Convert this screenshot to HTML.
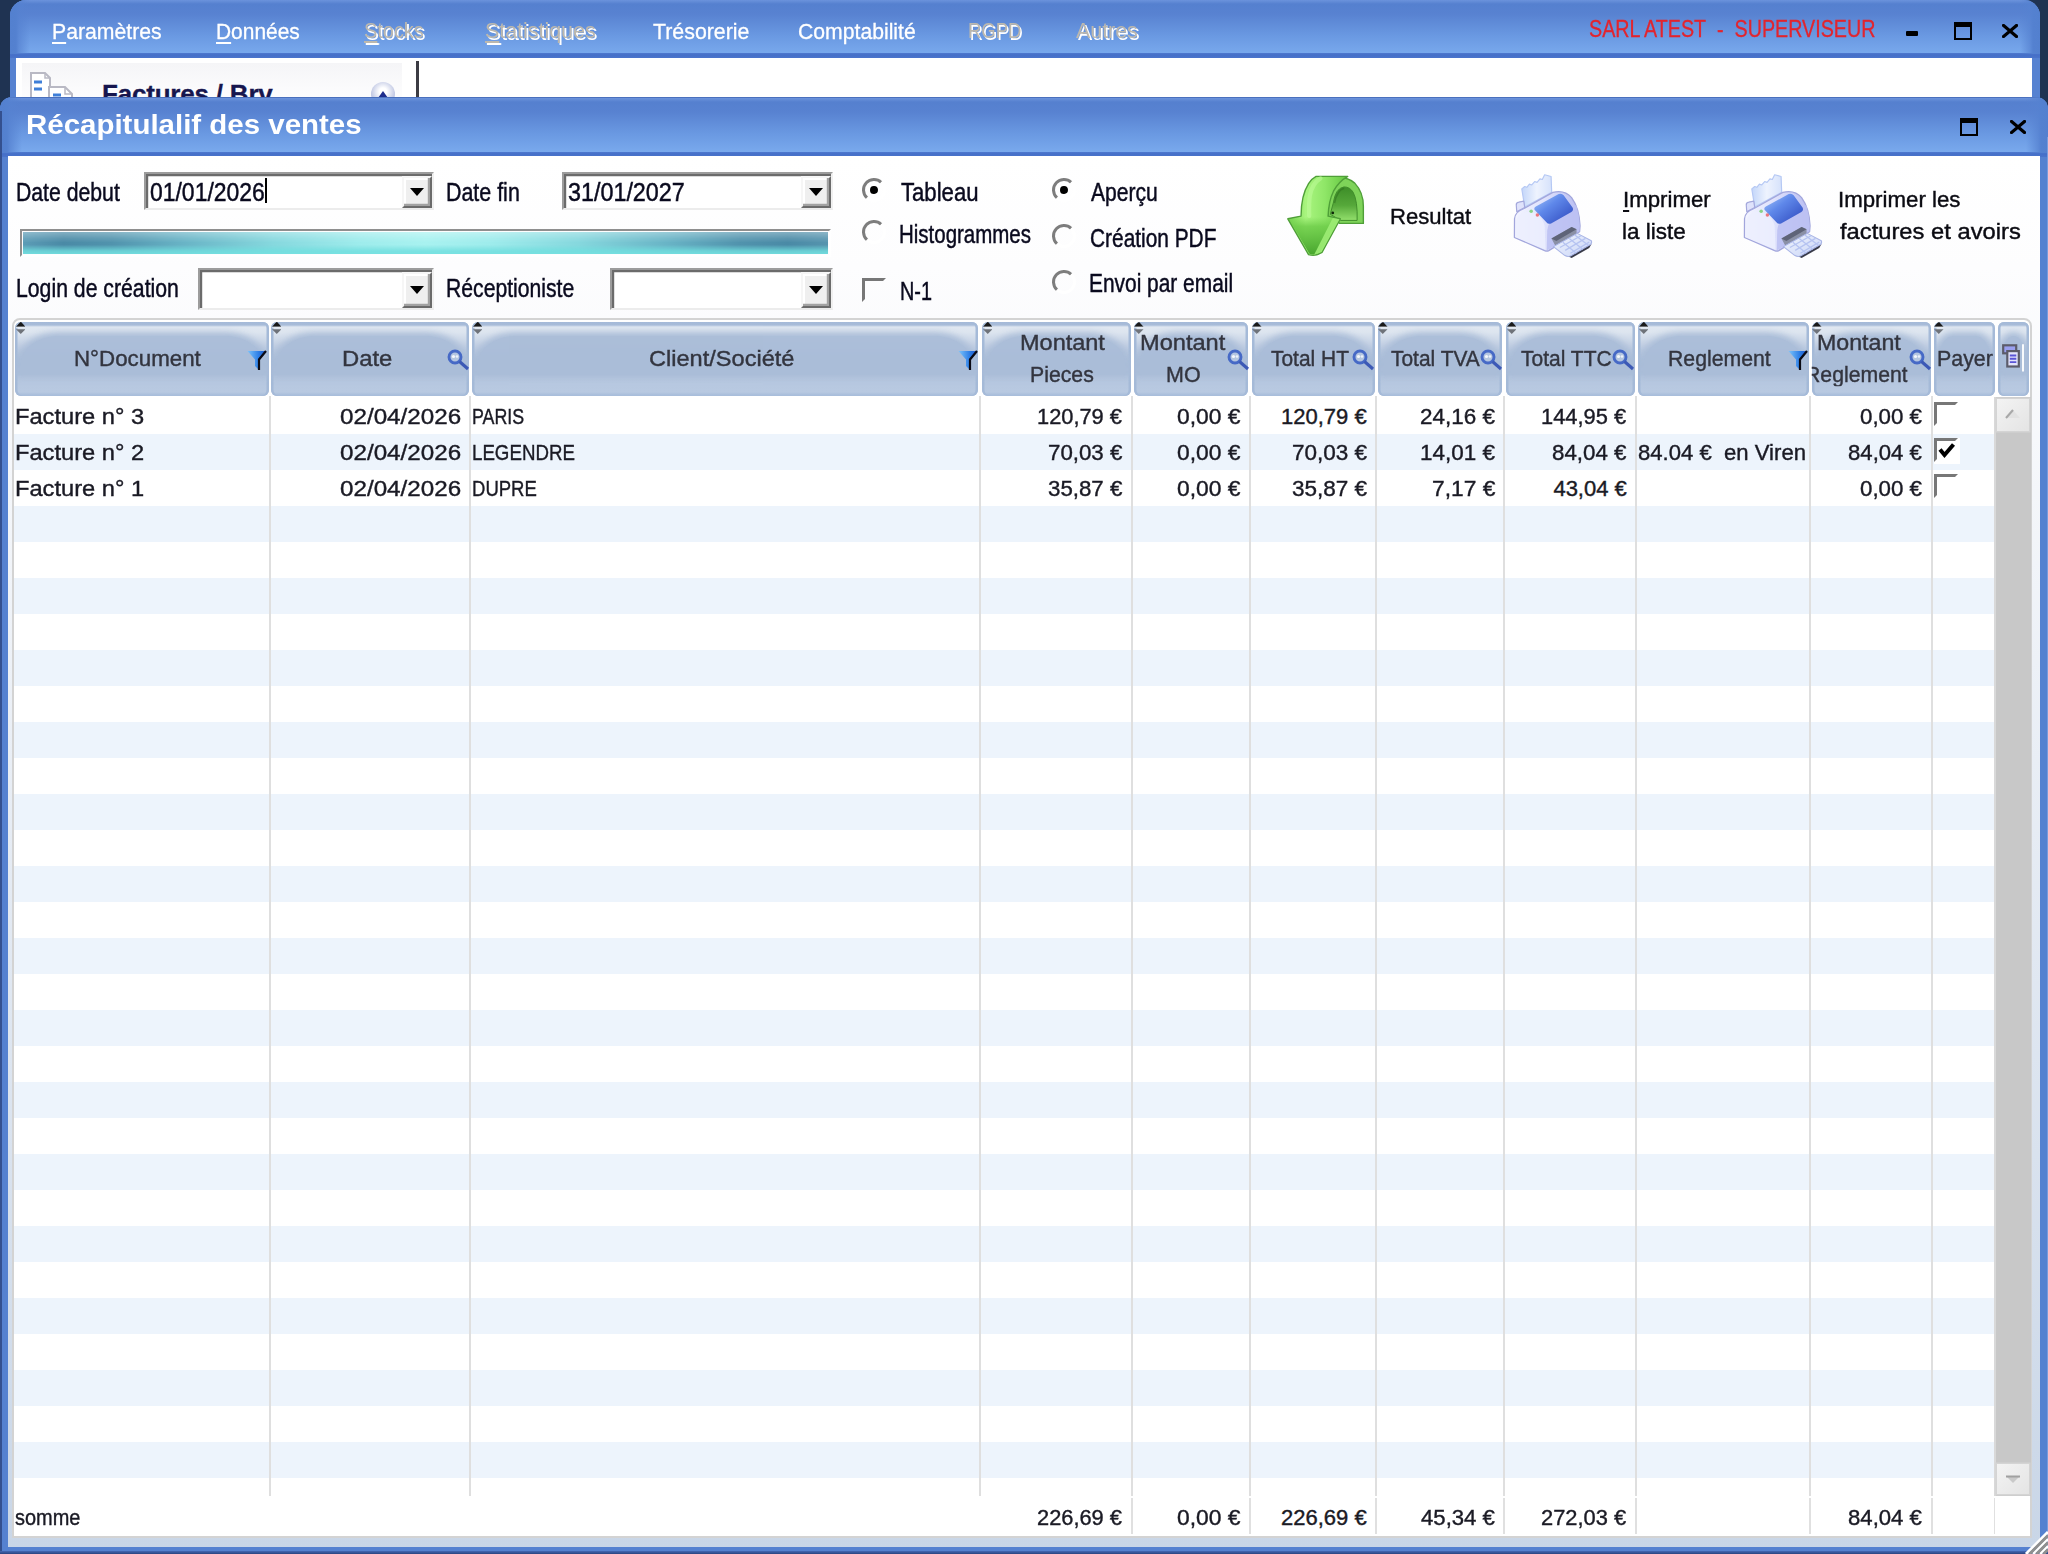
<!DOCTYPE html>
<html lang="fr"><head><meta charset="utf-8"><title>Récapitulalif des ventes</title>
<style>
html,body{margin:0;padding:0}
body{width:2048px;height:1554px;overflow:hidden;background:#1f3352;position:relative;font-family:"Liberation Sans",sans-serif}
.a,.t,i,b{position:absolute;display:block}
.t{white-space:nowrap;line-height:1;transform-origin:0 50%;color:#000;-webkit-text-stroke:.3px currentColor}
.t u{text-decoration-thickness:2px;text-underline-offset:3px}
.mn{color:#fff}
.sh{color:#bcb8ae;text-shadow:2px 2px 0 #fff;-webkit-text-stroke:0}
.red{color:#e3242d}
.ttl{color:#fff;font-weight:bold;-webkit-text-stroke:0}
.fl{color:#0a0a1e;-webkit-text-stroke:.45px currentColor}
.bt{color:#0b0b12;-webkit-text-stroke:.4px currentColor}
.th{color:#33353f;-webkit-text-stroke:.4px currentColor}
.td{color:#1a1a24;-webkit-text-stroke:.4px currentColor}
/* windows */
#ow{left:10px;top:0;width:2030px;height:140px;border-radius:16px 16px 0 0;background:#5682d1;overflow:hidden}
#iw{left:0;top:97px;width:2048px;height:1457px;border-radius:12px 12px 0 0;background:#5581d0;overflow:hidden}
.tb{left:0;right:0;top:0;height:56px;background:linear-gradient(#6b93dc 0,#5580cf 4px,#5882d1 14px,#6a99e2 36px,#79a9ed 54px,#79a9ed 100%)}
.tl{left:0;right:0;top:54px;height:5px;background:linear-gradient(#4e79cf,#456fc8 40%,#4a74cb)}
/* sunken inputs */
.inp{background:#fff;box-sizing:border-box;border:2px solid;border-color:#9c9c9c #f0f0f0 #ececec #9c9c9c;box-shadow:inset 2.2px 2.2px 0 #6b6b6b}
.dd{box-sizing:border-box;background:#efefef;border:2.2px solid;border-color:#f6f6f6 #6b6b6b #6b6b6b #f6f6f6;box-shadow:inset -2.2px -2.2px 0 #a2a2a2,inset 2px 2px 0 #fff}
.dd:after{content:"";position:absolute;left:50%;top:50%;margin:-4.5px 0 0 -7.5px;border:7.2px solid transparent;border-top:8.6px solid #000;border-bottom:0}
.rd{width:24px;height:24px;box-sizing:border-box;border-radius:50%;border:3px solid;border-color:#7d7d7d #fff #fff #7d7d7d;transform:rotate(-2deg)}
.rd.on:after{content:"";position:absolute;left:4.7px;top:4.7px;width:8.6px;height:8.6px;border-radius:50%;background:#000}
.cb{width:24px;height:24px;box-sizing:border-box;border:3.5px solid;border-color:#777 transparent transparent #777}
/* table */
.hc{top:322px;height:74px;border-radius:6px;overflow:hidden;box-sizing:border-box;
 background:linear-gradient(#a4b9d8 0,#a8bcd9 3px,#e0e7f1 5px,#dde5ef 10px,#cdd8e8 18px,#b9c8df 28px,#aabdd8 38px,#aabdd8 52px,#b6c7df 54px,#b8c9e1 70px,#a9bedb 73px);
 box-shadow:inset 2.5px 0 0 #a5bad8,inset -2.5px 0 0 #a5bad8}
.dm{left:5px;right:5px;top:14px;height:38px;border-radius:38px 38px 0 0/30px 30px 0 0;background:#aabdd8;box-shadow:0 0 6px 4px #aabdd8;opacity:.95}
.so{left:.5px;top:-.8px;width:9.5px;height:13.5px}
.vs{width:2px;background:#dfdfdf;top:396px;height:1100px}
.vf{width:2px;background:#e0e0e0;top:1498px;height:36px}
.alt{left:14px;width:1981px;height:36px;background:#edf4fc}
#pg{left:0;top:0;width:2048px;height:1554px;filter:blur(.55px)}
</style></head><body><div class="a" id="pg">
<div class="a" id="ow">
<i class="tb" style="height:55px"></i><i class="tl" style="top:53px"></i>
<i style="left:0;top:0;width:20px;height:54px;background:linear-gradient(to right,#5380cf 0,#5481d0 6px,rgba(86,130,209,.7) 9px,rgba(86,130,209,0) 20px)"></i>
<i style="right:0;top:0;width:20px;height:54px;background:linear-gradient(to left,#5380cf 0,#5481d0 7px,rgba(86,130,209,.7) 10px,rgba(86,130,209,0) 20px)"></i>
<i style="left:6px;top:58px;right:8px;bottom:0;background:#fff"></i>
<i style="left:12px;top:63px;width:380px;height:80px;background:linear-gradient(#f5f5f7,#fcfcfd 30px,#fff)"></i>
<i style="left:406px;top:61px;width:2.5px;height:80px;background:#3c3c44"></i>
</div>
<svg class="a" style="left:28px;top:70px" width="50" height="30" viewBox="0 0 50 30"><path d="M3 3h14l5 5v22H3z" fill="#fff" stroke="#b9b9c4" stroke-width="2"/><path d="M17 3v5h5" fill="none" stroke="#b9b9c4" stroke-width="1.5"/><path d="M6 12h8M6 19h8" stroke="#3f7fd8" stroke-width="3"/><path d="M21 17h16l7 7v8H21z" fill="#fff" stroke="#b9b9c4" stroke-width="2"/><path d="M37 17v7h7" fill="none" stroke="#b9b9c4" stroke-width="1.5"/><path d="M25 25h8" stroke="#3f7fd8" stroke-width="3"/></svg>
<span class="t" style="left:102px;top:81px;font-size:26px;font-weight:bold;color:#16164e;letter-spacing:-.2px">Factures / Brv</span>
<i style="left:371px;top:82px;width:24px;height:24px;border-radius:50%;background:radial-gradient(circle at 50% 40%,#fff 20%,#b8c0e0 70%,#8d97c8)"></i>
<i style="left:378px;top:91px;border:5px solid transparent;border-bottom:7px solid #1e2d8c;border-top:0"></i>
<div class="a" id="iw">
<i style="left:0;right:0;top:0;height:2px;background:#4a70bd"></i>
<i class="tb" style="top:1px"></i><i class="tl" style="top:55px"></i>
<i style="left:0;top:0;width:22px;height:56px;background:linear-gradient(to right,#5380cf 0,#5481d0 7px,rgba(86,130,209,.75) 10px,rgba(86,130,209,0) 22px)"></i>
<i style="right:0;top:0;width:22px;height:56px;background:linear-gradient(to left,#5380cf 0,#5481d0 7px,rgba(86,130,209,.75) 10px,rgba(86,130,209,0) 22px)"></i>
<i style="left:8px;top:59px;width:2032px;height:1391px;background:linear-gradient(#fff 0,#fdfdfe 8%,#c9d6e7 100%)"></i>
<i style="left:0;top:14px;width:1.500px;bottom:0;background:#34508f"></i>
<i style="right:0;top:40px;width:1.500px;bottom:0;background:#7a9bdb"></i>
<i style="left:0;right:0;bottom:0;height:3px;background:linear-gradient(#4468b4,#2a437f)"></i>
</div>
<div class="a" style="left:1906px;top:31px;width:12px;height:5px;background:#000;border-radius:1px"></div>
<i style="left:1954px;top:22px;width:18px;height:18px;box-sizing:border-box;border:2.5px solid #000;border-top-width:5px"></i>
<svg class="a" style="left:2002px;top:24px" width="16" height="14" viewBox="0 0 16 14"><path d="M1.5 1.5L14.5 12.5M14.5 1.5L1.5 12.5" stroke="#000" stroke-width="3.2" stroke-linecap="square"/></svg>
<i style="left:1960px;top:118px;width:18px;height:18px;box-sizing:border-box;border:2.5px solid #000;border-top-width:5px"></i>
<svg class="a" style="left:2010px;top:120px" width="16" height="14" viewBox="0 0 16 14"><path d="M1.5 1.5L14.5 12.5M14.5 1.5L1.5 12.5" stroke="#000" stroke-width="3.2" stroke-linecap="square"/></svg>
<div class="a inp" style="left:144px;top:172px;width:290px;height:38px;"></div>
<div class="a dd" style="left:402.3px;top:176.3px;width:29.7px;height:31.7px;"></div>
<div class="a inp" style="left:562px;top:172px;width:271px;height:38px;"></div>
<div class="a dd" style="left:801.3px;top:176.3px;width:29.7px;height:31.7px;"></div>
<div class="a inp" style="left:198px;top:268px;width:236px;height:42px;"></div>
<div class="a dd" style="left:402.3px;top:272.3px;width:29.7px;height:35.7px;"></div>
<div class="a inp" style="left:610px;top:268px;width:223px;height:42px;"></div>
<div class="a dd" style="left:801.3px;top:272.3px;width:29.7px;height:35.7px;"></div>
<div class="a" style="left:265.3px;top:178px;width:2px;height:25px;background:#000"></div>
<div class="a" style="left:20px;top:229px;width:811px;height:28px;box-sizing:border-box;border:2px solid;border-color:#8f8f8f #fff #fff #8f8f8f"></div>
<div class="a" style="left:22.5px;top:232px;width:805.5px;height:22px;background:linear-gradient(rgba(255,255,255,.32) 0,rgba(255,255,255,.1) 30%,rgba(255,255,255,0) 48%,rgba(112,222,222,0) 58%,rgba(112,222,222,.8) 86%,rgba(116,224,224,.92) 100%),linear-gradient(to right,#5c9cb6 0,#4a8aa6 5%,#5193ad 11%,#69b4c6 20%,#86d8de 31%,#9eecec 42%,#a8f2f0 50%,#9eecec 58%,#86d8de 69%,#69b4c6 80%,#5193ad 89%,#4a8aa6 95%,#5694ae 100%)"></div>
<i class="rd on" style="left:862px;top:178px"></i>
<i class="rd" style="left:862px;top:220px"></i>
<i class="rd on" style="left:1052px;top:178px"></i>
<i class="rd" style="left:1052px;top:224px"></i>
<i class="rd" style="left:1052px;top:270px"></i>
<i class="cb" style="left:862px;top:278px"></i>
<svg class="a" style="left:1286.1px;top:174px" width="79.5" height="83.8" viewBox="150 130 740 780">
<defs>
<linearGradient id="g1" x1="0" y1="0" x2="1" y2="0"><stop offset="0" stop-color="#74d24e"/><stop offset=".3" stop-color="#a9f57f"/><stop offset=".62" stop-color="#8fe667"/><stop offset="1" stop-color="#63c540"/></linearGradient>
<linearGradient id="g2" x1="0" y1="0" x2="0" y2="1"><stop offset="0" stop-color="#3d8d28"/><stop offset=".55" stop-color="#56a83a"/><stop offset="1" stop-color="#93e06c"/></linearGradient>
<linearGradient id="g3" x1="0" y1="0" x2="0" y2="1"><stop offset="0" stop-color="#74d04f" stop-opacity="0"/><stop offset=".25" stop-color="#6ccb48" stop-opacity=".8"/><stop offset="1" stop-color="#48a62e"/></linearGradient>
</defs>
<path d="M600 178 Q700 140 790 215 Q870 300 870 430 L870 590 L650 590 L540 525 Q545 330 600 178Z" fill="#7ed359" stroke="#4f9f38" stroke-width="13" stroke-linejoin="round"/>
<path d="M690 250 Q610 262 590 400 L562 505 L660 562 L812 562 Q818 380 775 300 Q745 250 690 250Z" fill="url(#g2)" stroke="#3f8c2b" stroke-width="9"/>
<path d="M690 262 Q625 280 602 400" fill="none" stroke="#2d6f1e" stroke-width="14" opacity=".55"/>
<path d="M430 152 L725 152 Q640 200 592 290 Q547 380 542 522 L655 547 L485 860 Q425 900 360 880 L167 547 L290 522 Q290 330 360 220 Q390 172 430 152Z" fill="url(#g1)" stroke="#4f9f38" stroke-width="13" stroke-linejoin="round"/>
<path d="M180 553 L292 530 L540 530 L640 552 L472 852 Q420 888 368 872Z" fill="url(#g3)"/>
<path d="M585 540 L648 552 L480 856 L412 882Z" fill="#9ceb74" opacity=".92"/>
<path d="M470 170 Q395 215 372 330 Q362 400 366 520" fill="none" stroke="#c5ffa2" stroke-width="40" opacity=".45" stroke-linecap="round"/>
<circle cx="585" cy="492" r="13" fill="#0d2608"/>
</svg>
<svg class="a" style="left:1513.4px;top:172.9px" width="80.9" height="85.6" viewBox="200 110 690 730">
<defs>
<linearGradient id="p1a" x1="0" y1="0" x2="1" y2="1"><stop offset="0" stop-color="#a9cbfb"/><stop offset=".4" stop-color="#5f88ea"/><stop offset="1" stop-color="#2c46bc"/></linearGradient>
<linearGradient id="p2a" x1="0" y1="0" x2="1" y2="0"><stop offset="0" stop-color="#f4f5ff"/><stop offset=".45" stop-color="#dfe2fc"/><stop offset="1" stop-color="#b7bcf1"/></linearGradient>
<linearGradient id="p3a" x1="0" y1="0" x2="1" y2="0"><stop offset="0" stop-color="#c3d6f9"/><stop offset=".5" stop-color="#eef3fe"/><stop offset="1" stop-color="#d6e2fb"/></linearGradient>
<linearGradient id="p4a" x1="0" y1="0" x2="1" y2="1"><stop offset="0" stop-color="#f2f5fe"/><stop offset="1" stop-color="#c9d5f6"/></linearGradient>
</defs>
<path d="M660 815 L700 835 L850 750 L870 715 L760 760Z" fill="#1c1f30" opacity=".88"/>
<path d="M275 245 L300 225 L318 232 L340 205 L360 212 L385 183 L405 190 L430 160 L450 165 L470 125 L525 140 L530 275 L300 400Z" fill="url(#p3a)" stroke="#b5c8f4" stroke-width="10" stroke-linejoin="round"/>
<path d="M228 385 Q225 362 250 358 L292 350 L300 405 L232 440Z" fill="#dfe2fb" stroke="#a4a8dc" stroke-width="10" stroke-linejoin="round"/>
<path d="M212 660 L213 500 Q218 440 290 415 L540 275 Q640 250 700 320 Q765 410 772 560 L768 610 L505 772 Q490 780 470 772Z" fill="url(#p2a)" stroke="#a2a6dc" stroke-width="11" stroke-linejoin="round"/>
<path d="M488 770 L492 600 Q500 520 560 480 L740 380 Q768 470 770 560 L766 606Z" fill="#bcc1f3" opacity=".9"/>
<path d="M225 655 L226 520 Q240 450 330 440 Q440 450 470 560 L478 765Z" fill="#eceefe" opacity=".85"/>
<path d="M395 395 L590 290 Q615 280 632 300 L708 405 Q720 428 698 442 L525 540 Q500 550 485 530 L385 425 Q375 405 395 395Z" fill="url(#p1a)"/>
<circle cx="355" cy="436" r="15" fill="#8bd387"/><circle cx="408" cy="468" r="15" fill="#e9767f"/>
<path d="M528 668 L700 570 L742 590 L742 625 L560 728Z" fill="#8a90a6"/>
<path d="M528 668 L700 570 L742 590 L570 690Z" fill="#5e6378"/>
<path d="M545 738 L748 625 L868 688 Q876 706 860 720 L690 818 Q665 828 640 812Z" fill="url(#p4a)" stroke="#a9b5e6" stroke-width="9" stroke-linejoin="round"/>
<path d="M600 745 L780 645 M645 770 L818 668 M690 795 L850 700 M625 700 L740 795 M680 668 L795 760 M730 640 L845 728" stroke="#b5c3f1" stroke-width="11"/>
</svg>
<svg class="a" style="left:1743.4px;top:172.9px" width="80.9" height="85.6" viewBox="200 110 690 730">
<defs>
<linearGradient id="p1b" x1="0" y1="0" x2="1" y2="1"><stop offset="0" stop-color="#a9cbfb"/><stop offset=".4" stop-color="#5f88ea"/><stop offset="1" stop-color="#2c46bc"/></linearGradient>
<linearGradient id="p2b" x1="0" y1="0" x2="1" y2="0"><stop offset="0" stop-color="#f4f5ff"/><stop offset=".45" stop-color="#dfe2fc"/><stop offset="1" stop-color="#b7bcf1"/></linearGradient>
<linearGradient id="p3b" x1="0" y1="0" x2="1" y2="0"><stop offset="0" stop-color="#c3d6f9"/><stop offset=".5" stop-color="#eef3fe"/><stop offset="1" stop-color="#d6e2fb"/></linearGradient>
<linearGradient id="p4b" x1="0" y1="0" x2="1" y2="1"><stop offset="0" stop-color="#f2f5fe"/><stop offset="1" stop-color="#c9d5f6"/></linearGradient>
</defs>
<path d="M660 815 L700 835 L850 750 L870 715 L760 760Z" fill="#1c1f30" opacity=".88"/>
<path d="M275 245 L300 225 L318 232 L340 205 L360 212 L385 183 L405 190 L430 160 L450 165 L470 125 L525 140 L530 275 L300 400Z" fill="url(#p3b)" stroke="#b5c8f4" stroke-width="10" stroke-linejoin="round"/>
<path d="M228 385 Q225 362 250 358 L292 350 L300 405 L232 440Z" fill="#dfe2fb" stroke="#a4a8dc" stroke-width="10" stroke-linejoin="round"/>
<path d="M212 660 L213 500 Q218 440 290 415 L540 275 Q640 250 700 320 Q765 410 772 560 L768 610 L505 772 Q490 780 470 772Z" fill="url(#p2b)" stroke="#a2a6dc" stroke-width="11" stroke-linejoin="round"/>
<path d="M488 770 L492 600 Q500 520 560 480 L740 380 Q768 470 770 560 L766 606Z" fill="#bcc1f3" opacity=".9"/>
<path d="M225 655 L226 520 Q240 450 330 440 Q440 450 470 560 L478 765Z" fill="#eceefe" opacity=".85"/>
<path d="M395 395 L590 290 Q615 280 632 300 L708 405 Q720 428 698 442 L525 540 Q500 550 485 530 L385 425 Q375 405 395 395Z" fill="url(#p1b)"/>
<circle cx="355" cy="436" r="15" fill="#8bd387"/><circle cx="408" cy="468" r="15" fill="#e9767f"/>
<path d="M528 668 L700 570 L742 590 L742 625 L560 728Z" fill="#8a90a6"/>
<path d="M528 668 L700 570 L742 590 L570 690Z" fill="#5e6378"/>
<path d="M545 738 L748 625 L868 688 Q876 706 860 720 L690 818 Q665 828 640 812Z" fill="url(#p4b)" stroke="#a9b5e6" stroke-width="9" stroke-linejoin="round"/>
<path d="M600 745 L780 645 M645 770 L818 668 M690 795 L850 700 M625 700 L740 795 M680 668 L795 760 M730 640 L845 728" stroke="#b5c3f1" stroke-width="11"/>
</svg>
<div class="a" style="left:12px;top:318px;width:2020px;height:1219.5px;box-sizing:border-box;border:2px solid #d3d3d3;border-radius:8px 8px 0 0;background:#fff"></div>
<i class="alt" style="top:434px"></i>
<i class="alt" style="top:506px"></i>
<i class="alt" style="top:578px"></i>
<i class="alt" style="top:650px"></i>
<i class="alt" style="top:722px"></i>
<i class="alt" style="top:794px"></i>
<i class="alt" style="top:866px"></i>
<i class="alt" style="top:938px"></i>
<i class="alt" style="top:1010px"></i>
<i class="alt" style="top:1082px"></i>
<i class="alt" style="top:1154px"></i>
<i class="alt" style="top:1226px"></i>
<i class="alt" style="top:1298px"></i>
<i class="alt" style="top:1370px"></i>
<i class="alt" style="top:1442px"></i>
<div class="a hc" style="left:15.4px;width:253.5px"><i class="dm"></i><svg class="a so" viewBox="0 0 10 14"><path d="M0 6L5 .5L10 6Z" fill="#1a1a1a"/><path d="M0 8.500h10L5 13.500Z" fill="#6f737a"/><path d="M0 6.500h10" stroke="#e8ecf2" stroke-width="1"/></svg></div>
<div class="a hc" style="left:271.4px;width:197.5px"><i class="dm"></i><svg class="a so" viewBox="0 0 10 14"><path d="M0 6L5 .5L10 6Z" fill="#1a1a1a"/><path d="M0 8.500h10L5 13.500Z" fill="#6f737a"/><path d="M0 6.500h10" stroke="#e8ecf2" stroke-width="1"/></svg></div>
<div class="a hc" style="left:472px;width:506.4px"><i class="dm"></i><svg class="a so" viewBox="0 0 10 14"><path d="M0 6L5 .5L10 6Z" fill="#1a1a1a"/><path d="M0 8.500h10L5 13.500Z" fill="#6f737a"/><path d="M0 6.500h10" stroke="#e8ecf2" stroke-width="1"/></svg></div>
<div class="a hc" style="left:982px;width:148.7px"><i class="dm"></i><svg class="a so" viewBox="0 0 10 14"><path d="M0 6L5 .5L10 6Z" fill="#1a1a1a"/><path d="M0 8.500h10L5 13.500Z" fill="#6f737a"/><path d="M0 6.500h10" stroke="#e8ecf2" stroke-width="1"/></svg></div>
<div class="a hc" style="left:1133.8px;width:114.6px"><i class="dm"></i><svg class="a so" viewBox="0 0 10 14"><path d="M0 6L5 .5L10 6Z" fill="#1a1a1a"/><path d="M0 8.500h10L5 13.500Z" fill="#6f737a"/><path d="M0 6.500h10" stroke="#e8ecf2" stroke-width="1"/></svg></div>
<div class="a hc" style="left:1251.9px;width:122.7px"><i class="dm"></i><svg class="a so" viewBox="0 0 10 14"><path d="M0 6L5 .5L10 6Z" fill="#1a1a1a"/><path d="M0 8.500h10L5 13.500Z" fill="#6f737a"/><path d="M0 6.500h10" stroke="#e8ecf2" stroke-width="1"/></svg></div>
<div class="a hc" style="left:1377.8px;width:124.6px"><i class="dm"></i><svg class="a so" viewBox="0 0 10 14"><path d="M0 6L5 .5L10 6Z" fill="#1a1a1a"/><path d="M0 8.500h10L5 13.500Z" fill="#6f737a"/><path d="M0 6.500h10" stroke="#e8ecf2" stroke-width="1"/></svg></div>
<div class="a hc" style="left:1506px;width:128.7px"><i class="dm"></i><svg class="a so" viewBox="0 0 10 14"><path d="M0 6L5 .5L10 6Z" fill="#1a1a1a"/><path d="M0 8.500h10L5 13.500Z" fill="#6f737a"/><path d="M0 6.500h10" stroke="#e8ecf2" stroke-width="1"/></svg></div>
<div class="a hc" style="left:1638px;width:170.6px"><i class="dm"></i><svg class="a so" viewBox="0 0 10 14"><path d="M0 6L5 .5L10 6Z" fill="#1a1a1a"/><path d="M0 8.500h10L5 13.500Z" fill="#6f737a"/><path d="M0 6.500h10" stroke="#e8ecf2" stroke-width="1"/></svg></div>
<div class="a hc" style="left:1811.8px;width:118.8px"><i class="dm"></i><svg class="a so" viewBox="0 0 10 14"><path d="M0 6L5 .5L10 6Z" fill="#1a1a1a"/><path d="M0 8.500h10L5 13.500Z" fill="#6f737a"/><path d="M0 6.500h10" stroke="#e8ecf2" stroke-width="1"/></svg></div>
<div class="a hc" style="left:1933.8px;width:61.4px"><i class="dm" style="border-radius:14px 14px 0 0/22px 22px 0 0;left:5px;right:5px"></i><svg class="a so" viewBox="0 0 10 14"><path d="M0 6L5 .5L10 6Z" fill="#1a1a1a"/><path d="M0 8.500h10L5 13.500Z" fill="#6f737a"/><path d="M0 6.500h10" stroke="#e8ecf2" stroke-width="1"/></svg></div>
<div class="a hc" style="left:1998.4px;width:30.5px"><i class="dm" style="border-radius:14px 14px 0 0/22px 22px 0 0;left:5px;right:5px"></i></div>
<i class="vs" style="left:268.5px"></i>
<i class="vs" style="left:468.5px"></i>
<i class="vs" style="left:978.5px"></i>
<i class="vs" style="left:1130.5px"></i>
<i class="vs" style="left:1248.5px"></i>
<i class="vs" style="left:1374.5px"></i>
<i class="vs" style="left:1502.5px"></i>
<i class="vs" style="left:1634.8px"></i>
<i class="vs" style="left:1808.7px"></i>
<i class="vs" style="left:1930.5px"></i>
<i class="vf" style="left:1130.5px"></i>
<i class="vf" style="left:1248.5px"></i>
<i class="vf" style="left:1374.5px"></i>
<i class="vf" style="left:1502.5px"></i>
<i class="vf" style="left:1634.8px"></i>
<i class="vf" style="left:1808.7px"></i>
<i class="vf" style="left:1930.5px"></i>
<i class="vf" style="left:1994px"></i>
<svg class="a" style="left:247px;top:350px" width="20" height="21" viewBox="0 0 20 21"><defs><linearGradient id="f0" x1="0" y1="0" x2="1" y2="0"><stop offset="0" stop-color="#7cc4fb"/><stop offset=".6" stop-color="#2f7fe6"/><stop offset="1" stop-color="#1d55c8"/></linearGradient></defs><path d="M.5 1H19L12 9.500V20L8 16V9.500Z" fill="url(#f0)"/><path d="M19 1L12 9.500V20" fill="none" stroke="#0a0a14" stroke-width="2.2"/></svg>
<svg class="a" style="left:957.5px;top:350px" width="20" height="21" viewBox="0 0 20 21"><defs><linearGradient id="f1" x1="0" y1="0" x2="1" y2="0"><stop offset="0" stop-color="#7cc4fb"/><stop offset=".6" stop-color="#2f7fe6"/><stop offset="1" stop-color="#1d55c8"/></linearGradient></defs><path d="M.5 1H19L12 9.500V20L8 16V9.500Z" fill="url(#f1)"/><path d="M19 1L12 9.500V20" fill="none" stroke="#0a0a14" stroke-width="2.2"/></svg>
<svg class="a" style="left:1787.5px;top:350px" width="20" height="21" viewBox="0 0 20 21"><defs><linearGradient id="f2" x1="0" y1="0" x2="1" y2="0"><stop offset="0" stop-color="#7cc4fb"/><stop offset=".6" stop-color="#2f7fe6"/><stop offset="1" stop-color="#1d55c8"/></linearGradient></defs><path d="M.5 1H19L12 9.500V20L8 16V9.500Z" fill="url(#f2)"/><path d="M19 1L12 9.500V20" fill="none" stroke="#0a0a14" stroke-width="2.2"/></svg>
<svg class="a" style="left:445.8px;top:348px" width="24" height="24" viewBox="0 0 24 24"><circle cx="9" cy="9" r="6" fill="rgba(190,205,232,.55)" stroke="#4669c6" stroke-width="2.9"/><circle cx="7.500" cy="8.500" r="1.600" fill="#f4f7fc"/><circle cx="11" cy="8.500" r="1.300" fill="#eef2fa"/><path d="M13.500 13.500L22 21" stroke="#3c59b6" stroke-width="3.1"/></svg>
<svg class="a" style="left:1225.5px;top:348px" width="24" height="24" viewBox="0 0 24 24"><circle cx="9" cy="9" r="6" fill="rgba(190,205,232,.55)" stroke="#4669c6" stroke-width="2.9"/><circle cx="7.500" cy="8.500" r="1.600" fill="#f4f7fc"/><circle cx="11" cy="8.500" r="1.300" fill="#eef2fa"/><path d="M13.500 13.500L22 21" stroke="#3c59b6" stroke-width="3.1"/></svg>
<svg class="a" style="left:1351px;top:348px" width="24" height="24" viewBox="0 0 24 24"><circle cx="9" cy="9" r="6" fill="rgba(190,205,232,.55)" stroke="#4669c6" stroke-width="2.9"/><circle cx="7.500" cy="8.500" r="1.600" fill="#f4f7fc"/><circle cx="11" cy="8.500" r="1.300" fill="#eef2fa"/><path d="M13.500 13.500L22 21" stroke="#3c59b6" stroke-width="3.1"/></svg>
<svg class="a" style="left:1479px;top:348px" width="24" height="24" viewBox="0 0 24 24"><circle cx="9" cy="9" r="6" fill="rgba(190,205,232,.55)" stroke="#4669c6" stroke-width="2.9"/><circle cx="7.500" cy="8.500" r="1.600" fill="#f4f7fc"/><circle cx="11" cy="8.500" r="1.300" fill="#eef2fa"/><path d="M13.500 13.500L22 21" stroke="#3c59b6" stroke-width="3.1"/></svg>
<svg class="a" style="left:1611.4px;top:348px" width="24" height="24" viewBox="0 0 24 24"><circle cx="9" cy="9" r="6" fill="rgba(190,205,232,.55)" stroke="#4669c6" stroke-width="2.9"/><circle cx="7.500" cy="8.500" r="1.600" fill="#f4f7fc"/><circle cx="11" cy="8.500" r="1.300" fill="#eef2fa"/><path d="M13.500 13.500L22 21" stroke="#3c59b6" stroke-width="3.1"/></svg>
<svg class="a" style="left:1907.8px;top:348px" width="24" height="24" viewBox="0 0 24 24"><circle cx="9" cy="9" r="6" fill="rgba(190,205,232,.55)" stroke="#4669c6" stroke-width="2.9"/><circle cx="7.500" cy="8.500" r="1.600" fill="#f4f7fc"/><circle cx="11" cy="8.500" r="1.300" fill="#eef2fa"/><path d="M13.500 13.500L22 21" stroke="#3c59b6" stroke-width="3.1"/></svg>
<svg class="a" style="left:2001px;top:343px" width="25" height="30" viewBox="0 0 25 30"><rect x="2.200" y="2.300" width="13" height="8" fill="#9aa0f0" stroke="#5c5c6a" stroke-width="2.200"/><rect x="6.300" y="8.100" width="11.500" height="15.400" fill="#e3e4fc" stroke="#5c5c6a" stroke-width="2.200"/><path d="M8.800 12.500h6.500M8.800 15.800h6.500M8.800 19.100h6.500" stroke="#5b55d6" stroke-width="1.900"/><path d="M22 1.300v27.300" stroke="#f8fafd" stroke-width="2"/></svg>
<i class="cb" style="left:1934px;top:402px"></i>
<div class="a" style="left:1934px;top:438px;width:26px;height:26px;background:#fff"></div>
<i class="cb" style="left:1934px;top:438px"></i>
<svg class="a" style="left:1938px;top:442px" width="18" height="18" viewBox="0 0 18 18"><path d="M2 7.500L6.500 13L15.500 2.500" fill="none" stroke="#000" stroke-width="4" stroke-linejoin="miter"/></svg>
<i class="cb" style="left:1934px;top:474px"></i>
<div class="a" style="left:1995px;top:397px;width:36px;height:1099px;background:#c8c8c8"></div>
<div class="a" style="left:1994px;top:397px;width:2px;height:1099px;background:#d9d9d9"></div>
<div class="a" style="left:1997px;top:399px;width:32px;height:32px;background:linear-gradient(135deg,#f3f3f3,#e4e4e4);box-shadow:0 0 0 1.5px #d4d4d4"></div>
<div class="a" style="left:1997px;top:1464px;width:32px;height:30px;background:linear-gradient(135deg,#f3f3f3,#e4e4e4);box-shadow:0 0 0 1.5px #d4d4d4"></div>
<svg class="a" style="left:2005px;top:409px" width="16" height="10" viewBox="0 0 16 10"><path d="M1 9L8 1L15 9Z" fill="#e2e2e2"/><path d="M1 9L8 1" stroke="#a8a8a8" stroke-width="2"/></svg>
<svg class="a" style="left:2005px;top:1475px" width="16" height="9" viewBox="0 0 16 9"><path d="M1 1H15L8 8Z" fill="#c9c9c9"/><path d="M1 1.500H15" stroke="#a0a0a0" stroke-width="2"/></svg>
<div class="a" style="left:1995px;top:1497px;width:35px;height:38px;background:#fff"></div>
<svg class="a" style="left:2022px;top:1528px" width="26" height="26" viewBox="0 0 26 26"><path d="M26 4L4 26M26 11L11 26M26 18L18 26" stroke="#fff" stroke-width="3"/><path d="M26 7.500L7.500 26M26 14.500L14.500 26M26 21.500L21.500 26" stroke="#8f8f8f" stroke-width="3"/></svg>
<span class="t c mn" style="left:52.00px;top:20.50px;font-size:22.5px;transform:scaleX(0.9422);"><u>P</u>aramètres</span>
<span class="t c mn" style="left:216.00px;top:20.50px;font-size:22.5px;transform:scaleX(0.9303);"><u>D</u>onnées</span>
<span class="t c mn sh" style="left:363.50px;top:20.00px;font-size:22.5px;transform:scaleX(0.8851);"><u>S</u>tocks</span>
<span class="t c mn sh" style="left:485.00px;top:20.00px;font-size:22.5px;transform:scaleX(0.9509);"><u>S</u>tatistiques</span>
<span class="t c mn" style="left:653.00px;top:20.50px;font-size:22.5px;transform:scaleX(0.9485);">Trésorerie</span>
<span class="t c mn" style="left:798.06px;top:20.50px;font-size:22.5px;transform:scaleX(0.9415);">Comptabilité</span>
<span class="t c mn sh" style="left:967.86px;top:20.00px;font-size:22.5px;transform:scaleX(0.8194);">RGPD</span>
<span class="t c mn sh" style="left:1076.00px;top:20.00px;font-size:22.5px;transform:scaleX(0.9500);">Autres</span>
<span class="t c red" style="left:1589.14px;top:18.00px;font-size:23px;transform:scaleX(0.8563);">SARL ATEST&nbsp; - &nbsp;SUPERVISEUR</span>
<span class="t c ttl" style="left:26.14px;top:110.50px;font-size:27.3px;transform:scaleX(1.0792);">Récapitulalif des ventes</span>
<span class="t c fl" style="left:16.32px;top:179.50px;font-size:25.3px;transform:scaleX(0.8385);">Date debut</span>
<span class="t c fl" style="left:150.09px;top:179.50px;font-size:25.3px;transform:scaleX(0.9064);">01/01/2026</span>
<span class="t c fl" style="left:446.31px;top:179.50px;font-size:25.3px;transform:scaleX(0.8464);">Date fin</span>
<span class="t c fl" style="left:568.08px;top:179.50px;font-size:25.3px;transform:scaleX(0.9224);">31/01/2027</span>
<span class="t c fl" style="left:16.32px;top:275.50px;font-size:25.3px;transform:scaleX(0.8393);">Login de création</span>
<span class="t c fl" style="left:446.33px;top:275.50px;font-size:25.3px;transform:scaleX(0.8364);">Réceptioniste</span>
<span class="t c fl" style="left:901.00px;top:179.50px;font-size:25.3px;transform:scaleX(0.8747);">Tableau</span>
<span class="t c fl" style="left:899.38px;top:221.50px;font-size:25.3px;transform:scaleX(0.8093);">Histogrammes</span>
<span class="t c fl" style="left:899.93px;top:279.10px;font-size:25.3px;transform:scaleX(0.7842);">N-1</span>
<span class="t c fl" style="left:1091.00px;top:179.50px;font-size:25.3px;transform:scaleX(0.8329);">Aperçu</span>
<span class="t c fl" style="left:1089.67px;top:225.50px;font-size:25.3px;transform:scaleX(0.8250);">Création PDF</span>
<span class="t c fl" style="left:1089.35px;top:271.10px;font-size:25.3px;transform:scaleX(0.8263);">Envoi par email</span>
<span class="t c bt" style="left:1389.79px;top:205.50px;font-size:22px;transform:scaleX(1.0051);">Resultat</span>
<span class="t c bt" style="left:1623.40px;top:189.00px;font-size:22px;transform:scaleX(1.0103);"><u>I</u>mprimer</span>
<span class="t c bt" style="left:1621.98px;top:221.20px;font-size:22px;transform:scaleX(1.0213);">la liste</span>
<span class="t c bt" style="left:1837.68px;top:188.90px;font-size:22px;transform:scaleX(1.0118);">Imprimer les</span>
<span class="t c bt" style="left:1839.70px;top:221.00px;font-size:22px;transform:scaleX(1.0790);">factures et avoirs</span>
<span class="t c th" style="left:74.17px;top:348.20px;font-size:22px;transform:scaleX(1.0146);">N°Document</span>
<span class="t c th" style="left:342.23px;top:348.20px;font-size:22px;transform:scaleX(1.0841);">Date</span>
<span class="t c th" style="left:649.13px;top:348.20px;font-size:22px;transform:scaleX(1.0716);">Client/Société</span>
<span class="t c th" style="left:1019.66px;top:331.50px;font-size:22px;transform:scaleX(1.0679);">Montant</span>
<span class="t c th" style="left:1030.47px;top:364.10px;font-size:22px;transform:scaleX(0.9656);">Pieces</span>
<span class="t c th" style="left:1139.65px;top:331.50px;font-size:22px;transform:scaleX(1.0731);">Montant</span>
<span class="t c th" style="left:1165.55px;top:364.10px;font-size:22px;transform:scaleX(0.9758);">MO</span>
<span class="t c th" style="left:1270.60px;top:348.20px;font-size:22px;transform:scaleX(0.9512);">Total HT</span>
<span class="t c th" style="left:1390.90px;top:348.20px;font-size:22px;transform:scaleX(0.9511);">Total TVA</span>
<span class="t c th" style="left:1520.70px;top:348.20px;font-size:22px;transform:scaleX(0.9553);">Total TTC</span>
<span class="t c th" style="left:1668.47px;top:348.20px;font-size:22px;transform:scaleX(0.9648);">Reglement</span>
<span class="t c th" style="left:1816.59px;top:331.50px;font-size:22px;transform:scaleX(1.0538);">Montant</span>
<span class="t c th clipR" style="left:1805.07px;top:364.30px;font-size:22px;transform:scaleX(0.9648);clip-path:inset(0 0 0 7.0px);">Reglement</span>
<span class="t c th" style="left:1936.76px;top:348.20px;font-size:22px;transform:scaleX(0.9714);">Payer</span>
<span class="t c td" style="left:15.35px;top:405.50px;font-size:22px;transform:scaleX(1.0752);">Facture n° 3</span>
<span class="t c td" style="left:339.90px;top:405.50px;font-size:22px;transform:scaleX(1.1000);">02/04/2026</span>
<span class="t c td" style="left:472.38px;top:405.50px;font-size:22px;transform:scaleX(0.8113);">PARIS</span>
<span class="t c td" style="left:1037.01px;top:405.50px;font-size:22px;transform:scaleX(0.9918);">120,79 €</span>
<span class="t c td" style="left:1177.46px;top:405.50px;font-size:22px;transform:scaleX(1.0367);">0,00 €</span>
<span class="t c td" style="left:1281.00px;top:405.50px;font-size:22px;transform:scaleX(1.0000);">120,79 €</span>
<span class="t c td" style="left:1420.18px;top:405.50px;font-size:22px;transform:scaleX(1.0208);">24,16 €</span>
<span class="t c td" style="left:1541.01px;top:405.50px;font-size:22px;transform:scaleX(0.9929);">144,95 €</span>
<span class="t c td" style="left:1859.99px;top:405.50px;font-size:22px;transform:scaleX(1.0133);">0,00 €</span>
<span class="t c td" style="left:15.35px;top:441.50px;font-size:22px;transform:scaleX(1.0752);">Facture n° 2</span>
<span class="t c td" style="left:339.90px;top:441.50px;font-size:22px;transform:scaleX(1.1000);">02/04/2026</span>
<span class="t c td" style="left:472.30px;top:441.50px;font-size:22px;transform:scaleX(0.8500);">LEGENDRE</span>
<span class="t c td" style="left:1048.39px;top:441.50px;font-size:22px;transform:scaleX(1.0125);">70,03 €</span>
<span class="t c td" style="left:1177.46px;top:441.50px;font-size:22px;transform:scaleX(1.0367);">0,00 €</span>
<span class="t c td" style="left:1292.28px;top:441.50px;font-size:22px;transform:scaleX(1.0236);">70,03 €</span>
<span class="t c td" style="left:1420.18px;top:441.50px;font-size:22px;transform:scaleX(1.0208);">14,01 €</span>
<span class="t c td" style="left:1552.39px;top:441.50px;font-size:22px;transform:scaleX(1.0139);">84,04 €</span>
<span class="t c td" style="left:1638.00px;top:441.50px;font-size:22px;transform:scaleX(1.0048);">84.04 €&nbsp; en Viren</span>
<span class="t c td" style="left:1848.29px;top:441.50px;font-size:22px;transform:scaleX(1.0069);">84,04 €</span>
<span class="t c td" style="left:15.35px;top:477.50px;font-size:22px;transform:scaleX(1.0752);">Facture n° 1</span>
<span class="t c td" style="left:339.90px;top:477.50px;font-size:22px;transform:scaleX(1.1000);">02/04/2026</span>
<span class="t c td" style="left:472.32px;top:477.50px;font-size:22px;transform:scaleX(0.8419);">DUPRE</span>
<span class="t c td" style="left:1048.39px;top:477.50px;font-size:22px;transform:scaleX(1.0125);">35,87 €</span>
<span class="t c td" style="left:1177.46px;top:477.50px;font-size:22px;transform:scaleX(1.0367);">0,00 €</span>
<span class="t c td" style="left:1292.28px;top:477.50px;font-size:22px;transform:scaleX(1.0236);">35,87 €</span>
<span class="t c td" style="left:1431.56px;top:477.50px;font-size:22px;transform:scaleX(1.0350);">7,17 €</span>
<span class="t c td" style="left:1553.40px;top:477.50px;font-size:22px;transform:scaleX(1.0000);">43,04 €</span>
<span class="t c td" style="left:1859.99px;top:477.50px;font-size:22px;transform:scaleX(1.0133);">0,00 €</span>
<span class="t c td" style="left:15.00px;top:1506.50px;font-size:22px;transform:scaleX(0.9069);">somme</span>
<span class="t c td" style="left:1037.01px;top:1506.50px;font-size:22px;transform:scaleX(0.9918);">226,69 €</span>
<span class="t c td" style="left:1177.46px;top:1506.50px;font-size:22px;transform:scaleX(1.0367);">0,00 €</span>
<span class="t c td" style="left:1281.00px;top:1506.50px;font-size:22px;transform:scaleX(1.0000);">226,69 €</span>
<span class="t c td" style="left:1421.20px;top:1506.50px;font-size:22px;transform:scaleX(1.0068);">45,34 €</span>
<span class="t c td" style="left:1541.01px;top:1506.50px;font-size:22px;transform:scaleX(0.9929);">272,03 €</span>
<span class="t c td" style="left:1848.29px;top:1506.50px;font-size:22px;transform:scaleX(1.0069);">84,04 €</span>
</div></body></html>
